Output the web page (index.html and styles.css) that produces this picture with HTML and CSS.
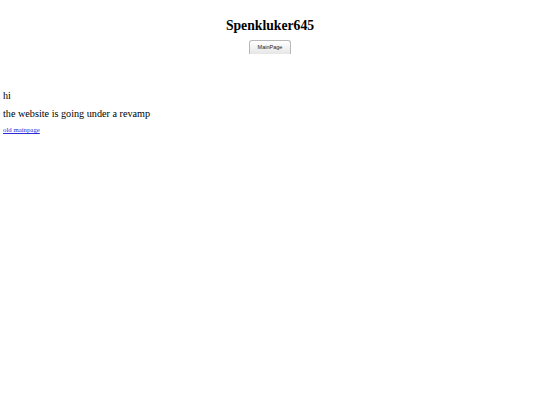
FILE: index.html
```html
<!DOCTYPE html>
<html>
<head>
<meta charset="utf-8">
<link rel="stylesheet" href="styles.css">
</head>
<body>
<header class="top">
  <h1 class="title">Spenkluker645</h1>
  <nav class="tabs"><a class="tab" href="#">MainPage</a></nav>
</header>
<main class="content">
  <p class="line">hi</p>
  <p class="line">the website is going under a revamp</p>
  <a class="old" href="#">old mainpage</a>
</main>
</body>
</html>
```
FILE: styles.css
```css
html, body { margin: 0; padding: 0; background: #fff; }
body { font-family: "Liberation Serif", "Times New Roman", serif; color: #000; padding: 0 3px; }
.top { display: flex; flex-direction: column; align-items: center; padding-top: 17px; }
.title { margin: 0; font-size: 13.7px; line-height: 17px; font-weight: bold; }
.tabs { margin-top: 6px; display: flex; justify-content: center; }
.tab {
  display: block; width: 40px; height: 13px; box-sizing: content-box;
  border: 1px solid #b8b8b8; border-bottom: none; border-radius: 3px 3px 0 0;
  background: linear-gradient(#ffffff, #e6e6e6);
  font-family: "Liberation Sans", Arial, sans-serif; font-size: 5.5px; line-height: 13px;
  text-align: center; color: #222; text-decoration: none;
}
.content { padding-top: 35px; }
.line { margin: 0 0 5px; font-size: 10.2px; line-height: 13px; }
.old { display: block; margin-top: 0; font-size: 6.8px; line-height: 9px; color: #2a2ad8; text-decoration: underline; }
```
